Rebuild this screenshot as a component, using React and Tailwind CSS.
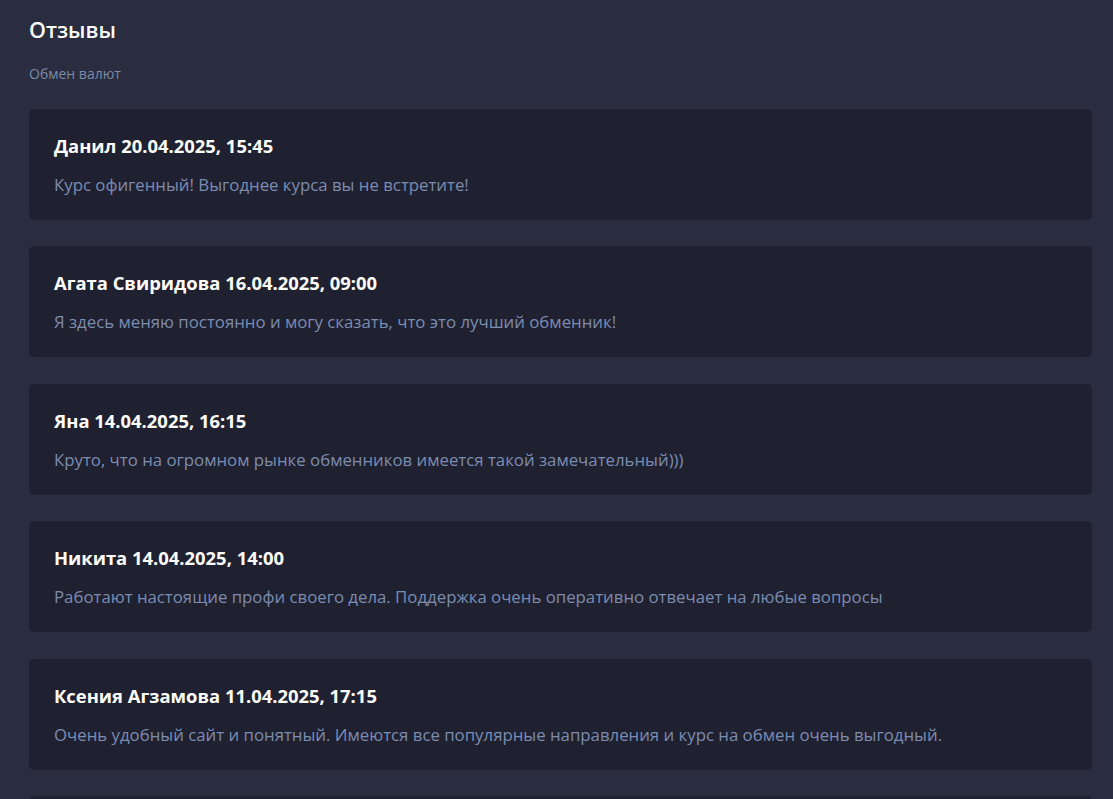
import React from 'react';

const reviews = [
  { name: 'Данил', date: '20.04.2025, 15:45', text: 'Курс офигенный! Выгоднее курса вы не встретите!' },
  { name: 'Агата Свиридова', date: '16.04.2025, 09:00', text: 'Я здесь меняю постоянно и могу сказать, что это лучший обменник!' },
  { name: 'Яна', date: '14.04.2025, 16:15', text: 'Круто, что на огромном рынке обменников имеется такой замечательный)))' },
  { name: 'Никита', date: '14.04.2025, 14:00', text: 'Работают настоящие профи своего дела. Поддержка очень оперативно отвечает на любые вопросы' },
  { name: 'Ксения Агзамова', date: '11.04.2025, 17:15', text: 'Очень удобный сайт и понятный. Имеются все популярные направления и курс на обмен очень выгодный.' },
  { name: 'Олег', date: '09.04.2025, 12:30', text: 'Всё быстро и чётко, рекомендую.' },
];

export default function App() {
  return (
    <div className="min-h-screen bg-[#292d3f] pl-[29px] pr-[21px] pt-[16px] pb-10 font-['Open_Sans','Noto_Sans',sans-serif]">
      <h1 className="text-[21.5px] leading-[28px] text-white font-semibold">Отзывы</h1>
      <p className="mt-[21px] text-[14px] leading-[18px] text-[#7d8aa8]">Обмен валют</p>
      <div className="mt-[26px] flex flex-col gap-[26.4px]">
        {reviews.map((r, i) => (
          <div key={i} className="h-[111px] bg-[#1f2130] rounded-[5px] pl-[25px] pr-6 pt-[25px]">
            <div className="text-[18.4px] leading-[24px] font-bold text-white">
              {r.name} {r.date}
            </div>
            <div className="mt-[15px] text-[16.8px] leading-[24px] text-[#7c8cb0]">{r.text}</div>
          </div>
        ))}
      </div>
    </div>
  );
}
